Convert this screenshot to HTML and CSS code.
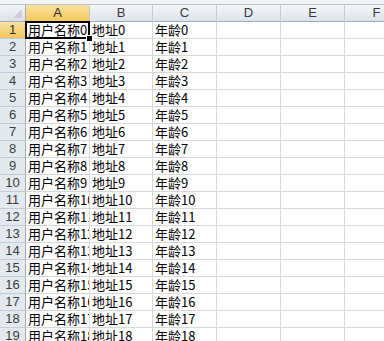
FILE: index.html
```html
<!DOCTYPE html>
<html lang="zh">
<head>
    <meta charset="UTF-8">
    <title>Sheet1</title>
    <link rel="stylesheet" href="styles.css">
</head>
<body>
    <div class="sheet">
        <div class="top-strip"></div>
        <div class="grid" id="grid">
            <div class="corner"><span class="corner-mark"></span></div>
            <div class="col-head selected">A</div>
            <div class="col-head">B</div>
            <div class="col-head">C</div>
            <div class="col-head">D</div>
            <div class="col-head">E</div>
            <div class="col-head">F</div>
        </div>
    </div>

    <script>
        function buildRows() {
            const grid = document.getElementById('grid');
            for (let i = 0; i < 19; i++) {
                const head = document.createElement('div');
                head.className = i === 0 ? 'row-head selected' : 'row-head';
                head.textContent = i + 1;
                grid.appendChild(head);

                const values = ['用户名称' + i, '地址' + i, '年龄' + i, '', '', ''];
                values.forEach((value, col) => {
                    const cell = document.createElement('div');
                    cell.className = 'cell';
                    cell.textContent = value;
                    if (i === 0 && col === 0) {
                        cell.classList.add('active');
                        cell.innerHTML += '<span class="cursor"></span><span class="handle"></span>';
                    }
                    grid.appendChild(cell);
                });
            }
        }

        buildRows();
    </script>
</body>
</html>
```

FILE: styles.css
```css
body {
    margin: 0;
    background-color: #ffffff;
    font-family: "Noto Sans CJK SC", "DejaVu Sans", sans-serif;
    overflow: hidden;
}
.sheet {
    width: 384px;
    height: 341px;
    overflow: hidden;
}
.top-strip {
    height: 4px;
    background-color: #f3f4f6;
    border-bottom: 1px solid #b8c1cc;
}
.grid {
    display: grid;
    grid-template-columns: 26px 64px 63px 64px 64px 64px 64px;
    grid-auto-rows: 17px;
}
.corner {
    background: linear-gradient(#f2f4f7, #dde3ea);
    border-right: 1px solid #9eabbb;
    border-bottom: 1px solid #9eabbb;
    box-sizing: border-box;
    position: relative;
}
.corner-mark {
    position: absolute;
    right: 3px;
    bottom: 3px;
    width: 0;
    height: 0;
    border-left: 9px solid transparent;
    border-bottom: 9px solid #c9d0d9;
}
.col-head {
    background: linear-gradient(#f4f6f9, #dde3eb);
    border-right: 1px solid #c3cbd6;
    border-bottom: 1px solid #9eabbb;
    box-sizing: border-box;
    font-family: "Liberation Sans", Arial, sans-serif;
    font-size: 13px;
    color: #3b3b3b;
    text-align: center;
    line-height: 16px;
}
.row-head {
    background-color: #e4e9f0;
    border-right: 1px solid #9eabbb;
    border-bottom: 1px solid #c3cbd6;
    box-sizing: border-box;
    font-family: "Liberation Sans", Arial, sans-serif;
    font-size: 13px;
    color: #3b3b3b;
    text-align: center;
    line-height: 16px;
}
.col-head.selected,
.row-head.selected {
    background: linear-gradient(#fbe3a0, #f3c65e);
    color: #2a2a2a;
}
.cell {
    border-right: 1px solid #d8d8d8;
    border-bottom: 1px solid #d8d8d8;
    box-sizing: border-box;
    font-size: 13px;
    line-height: 16px;
    padding-left: 2px;
    white-space: nowrap;
    overflow: hidden;
    color: #000000;
}
.cell.active {
    position: relative;
    overflow: visible;
}
.cursor {
    position: absolute;
    left: -1px;
    top: -1px;
    right: -1px;
    bottom: -1px;
    border: 2px solid #000000;
}
.handle {
    position: absolute;
    right: -4px;
    bottom: -4px;
    width: 5px;
    height: 5px;
    background-color: #000000;
    border: 1px solid #ffffff;
}
```
